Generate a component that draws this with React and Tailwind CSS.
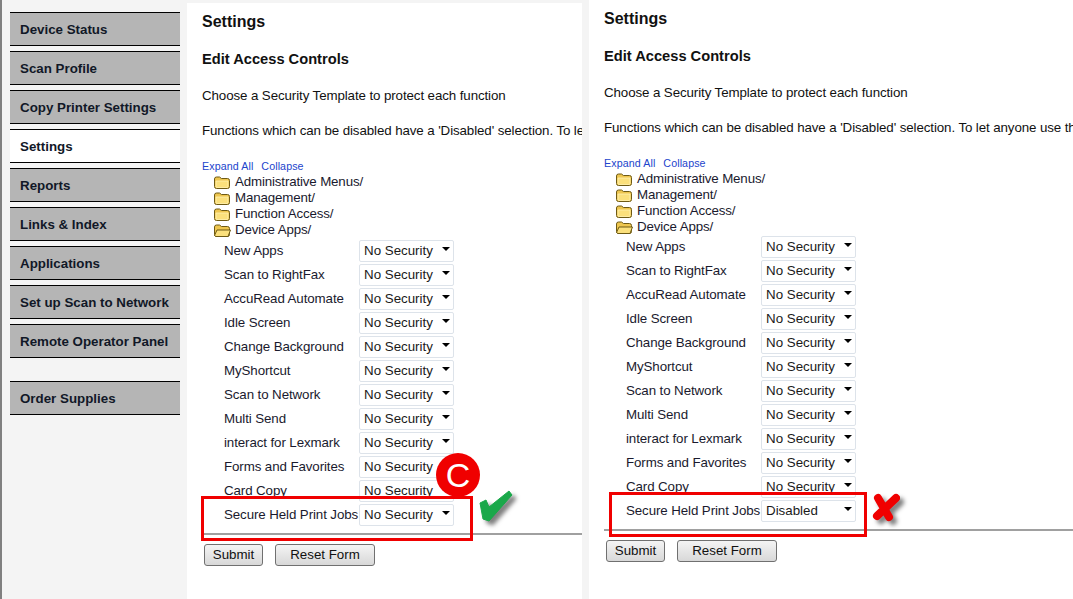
const NAV = [
  'Device Status',
  'Scan Profile',
  'Copy Printer Settings',
  'Settings',
  'Reports',
  'Links & Index',
  'Applications',
  'Set up Scan to Network',
  'Remote Operator Panel',
];

const FOLDERS = ['Administrative Menus/', 'Management/', 'Function Access/', 'Device Apps/'];

const APPS = [
  'New Apps',
  'Scan to RightFax',
  'AccuRead Automate',
  'Idle Screen',
  'Change Background',
  'MyShortcut',
  'Scan to Network',
  'Multi Send',
  'interact for Lexmark',
  'Forms and Favorites',
  'Card Copy',
];

function NavItem({ label, active }) {
  return (
    <div
      className={`h-[34px] w-[170px] border-y border-black pl-[10px] pt-[2px] flex items-center text-[13.33px] font-bold text-[#111827] ${
        active ? 'bg-white' : 'bg-[#b5b5b5]'
      }`}
    >
      {label}
    </div>
  );
}

function Sidebar() {
  return (
    <aside className="w-[187px] shrink-0 bg-[#f4f4f4] border-l-2 border-[#808080] pl-2 pt-3">
      <div className="flex flex-col gap-[5px]">
        {NAV.map((n) => (
          <NavItem key={n} label={n} active={n === 'Settings'} />
        ))}
      </div>
      <div className="mt-[23px]">
        <NavItem label="Order Supplies" />
      </div>
    </aside>
  );
}

function Folder({ open }) {
  return (
    <svg width="18" height="13" viewBox="0 0 18 13" className="shrink-0">
      <path d="M1.5 3 Q1.5 1 3.5 1 H6.5 L8.5 2.5 H14.5 Q16.5 2.5 16.5 4.5 V10.5 Q16.5 12.5 14.5 12.5 H3.5 Q1.5 12.5 1.5 10.5 Z" fill="#eec64f" stroke="#6e5a14" />
      {open ? (
        <path d="M1.5 11.5 L4 6 H17.5 L15 12.5 H3 Z" fill="#fbe07c" stroke="#6e5a14" strokeLinejoin="round" />
      ) : (
        <path d="M3 5 H15 V10.5 Q15 11.5 14 11.5 H4 Q3 11.5 3 10.5 Z" fill="#fbe07c" stroke="#fff3b5" strokeWidth="0.8" />
      )}
    </svg>
  );
}

function SecuritySelect({ value = 'No Security' }) {
  return (
    <div className="relative h-[22px] w-[95px] shrink-0">
      <select
        defaultValue={value}
        className="appearance-none h-full w-full bg-white border border-[#dde3ea] rounded-[2px] pl-1 text-[13.33px] text-[#1a1a1a] outline-none"
      >
        <option>No Security</option>
        <option>Disabled</option>
      </select>
      <span className="absolute right-[4px] top-[9px] w-0 h-0 border-x-[4px] border-x-transparent border-t-[4px] border-t-black" />
    </div>
  );
}

function AppRow({ label, value }) {
  return (
    <div className="flex items-center h-6 pl-[22px]">
      <span className="w-[135px] shrink-0 whitespace-nowrap pt-[3px] text-[13.33px] tracking-[-0.1px] text-[#1a1a2e]">{label}</span>
      <SecuritySelect value={value} />
    </div>
  );
}

function FormButton({ className, children }) {
  return (
    <button
      className={`h-[22px] rounded-[3px] border border-[#707070] bg-gradient-to-b from-[#f4f4f4] to-[#d8d8d8] text-[13.33px] text-[#111] ${className}`}
    >
      {children}
    </button>
  );
}

function SettingsPanel({ heldValue, rowsClass, className }) {
  return (
    <main className={`bg-white overflow-hidden pl-[15px] ${className}`}>
      <h1 className="mt-[9px] h-[19px] leading-[19px] text-[16px] font-bold text-[#111]">Settings</h1>
      <h2 className="mt-[19px] h-[19px] leading-[19px] text-[14.67px] font-bold text-[#111]">Edit Access Controls</h2>
      <p className="mt-[18px] h-[18px] leading-[18px] text-[13.33px] tracking-[-0.1px] whitespace-nowrap text-[#111]">Choose a Security Template to protect each function</p>
      <p className="mt-[17px] h-[18px] leading-[18px] text-[13.33px] tracking-[-0.1px] whitespace-nowrap text-[#111]">
        Functions which can be disabled have a 'Disabled' selection. To let anyone use this function without needing to log in, select 'No Security'.
      </p>
      <div className="mt-[20px] h-[12px] leading-[12px] text-[10.67px] tracking-[0.1px] text-[#2244cc] flex gap-2">
        <span>Expand All</span>
        <span>Collapse</span>
      </div>
      <div className="pl-[11px] mt-[2px]">
        {FOLDERS.map((f) => (
          <div key={f} className="flex items-center gap-[4px] h-4 text-[13.33px] tracking-[-0.15px] text-[#1a1a2e]">
            <Folder open={f === 'Device Apps/'} />
            {f}
          </div>
        ))}
      </div>
      <div className={rowsClass}>
        {APPS.map((a) => (
          <AppRow key={a} label={a} />
        ))}
        <AppRow label="Secure Held Print Jobs" value={heldValue} />
      </div>
      <div className="mt-[8px] h-[2px] bg-[#a0a0a0] w-[600px]" />
      <div className="mt-[9px] ml-[2px] flex gap-[12px]">
        <FormButton className="w-[59px]">Submit</FormButton>
        <FormButton className="w-[100px]">Reset Form</FormButton>
      </div>
    </main>
  );
}

function App() {
  return (
    <div className="relative flex h-[599px] w-[1073px] overflow-hidden bg-[#f4f4f4] font-['Liberation_Sans',Arial,sans-serif]">
      <Sidebar />
      <SettingsPanel heldValue="No Security" rowsClass="-mt-px" className="w-[395px] mt-[3px]" />
      <div className="w-[7px] shrink-0" />
      <SettingsPanel heldValue="Disabled" rowsClass="-mt-[2px]" className="flex-1" />

      {/* annotations */}
      <div className="absolute left-[201px] top-[496px] w-[272px] h-[45px] border-[3px] border-[#f00000]" />
      <div className="absolute left-[609px] top-[492px] w-[258px] h-[45px] border-[3px] border-[#f00000]" />
      <div className="absolute left-[436px] top-[453px] w-[44px] h-[44px] rounded-full bg-[#f00000] text-white text-[34px] leading-[44px] text-center">C</div>
      <svg width="38" height="34" viewBox="0 0 38 34" className="absolute left-[478px] top-[490px] drop-shadow-[4px_4px_2px_rgba(0,0,0,0.5)]">
        <path d="M2 13 L8 10 L11 17 L31 1 L34 5 L11 31 L5 29 Z" fill="#1aa84a" stroke="#1aa84a" strokeLinejoin="round" />
      </svg>
      <svg width="30" height="30" viewBox="0 0 30 30" className="absolute left-[870px] top-[492px] drop-shadow-[4px_4px_2px_rgba(0,0,0,0.5)]">
        <path d="M26 6 L7 24 M8 6 L19 25" fill="none" stroke="#f00000" strokeWidth="8" strokeLinecap="round" />
      </svg>
    </div>
  );
}

export default App;
